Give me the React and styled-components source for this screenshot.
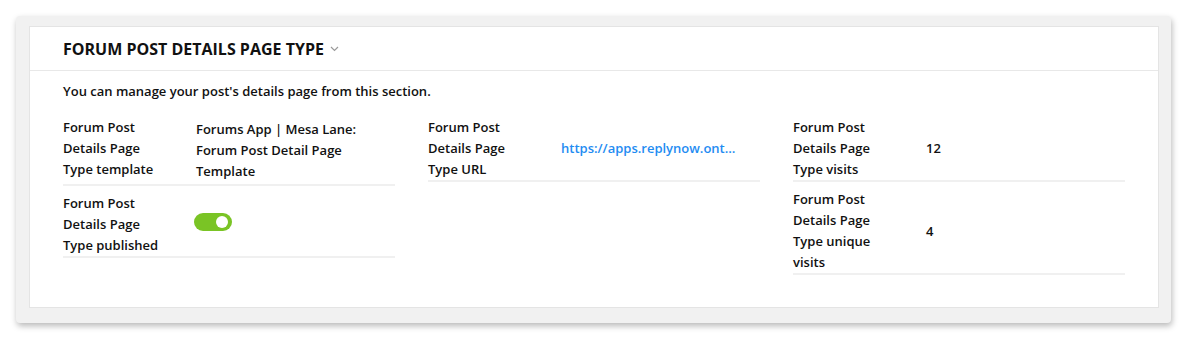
import React from "react";
import styled, { createGlobalStyle } from "styled-components";

const GlobalStyle = createGlobalStyle`
  body {
    margin: 0;
    padding: 16px;
    background: #fff;
    font-family: "Open Sans", "Liberation Sans", sans-serif;
    color: #111;
  }
`;

const Frame = styled.div`
  background: #f1f1f1;
  border-radius: 4px;
  box-shadow: 1px 3px 6px rgba(0, 0, 0, 0.28);
  padding: 10px 12px 15px 13px;
`;

const Card = styled.section`
  background: #fff;
  border: 1px solid #e4e4e4;
`;

const Header = styled.header`
  height: 43px;
  display: flex;
  align-items: center;
  gap: 6px;
  padding: 0 33px;
  border-bottom: 1px solid #e8e8e8;
  h2 {
    margin: 0;
    font-size: 16px;
    font-weight: 700;
    color: #111;
  }
  svg {
    margin-top: 1px;
  }
`;

const Body = styled.div`
  padding: 10px 32px 32px 33px;
`;

const Intro = styled.p`
  margin: 0 0 8px;
  font-size: 13px;
  font-weight: 600;
  line-height: 21px;
`;

const Columns = styled.div`
  display: grid;
  grid-template-columns: repeat(3, 332px);
  column-gap: 33px;
  align-items: start;
`;

const Column = styled.div`
  display: flex;
  flex-direction: column;
`;

const Row = styled.div`
  display: grid;
  grid-template-columns: 133px 1fr;
  align-items: center;
  padding-top: 7px;
  border-bottom: 2px solid #f0f0f0;
`;

const Label = styled.div`
  align-self: start;
  font-size: 13px;
  font-weight: 600;
  line-height: 21px;
  padding-right: 30px;
`;

const Value = styled.div`
  font-size: 13px;
  font-weight: 600;
  line-height: 21px;
  padding: 2px 20px 2px 0;
  min-width: 0;
  color: ${(p) => (p.$link ? "#1f8cf2" : "#111")};
  ${(p) =>
    p.$link &&
    `
    white-space: nowrap;
    overflow: hidden;
    text-overflow: ellipsis;
  `}
`;

const Switch = styled.span`
  position: relative;
  display: block;
  width: 38px;
  height: 18px;
  margin: 0 0 6px -2px;
  border-radius: 9px;
  background: ${(p) => (p.$on ? "#7ac425" : "#ccc")};
  &::after {
    content: "";
    position: absolute;
    top: 3px;
    ${(p) => (p.$on ? "right: 4px;" : "left: 4px;")}
    width: 12px;
    height: 12px;
    border-radius: 50%;
    background: #fff;
  }
`;

const Chevron = () => (
  <svg width="9" height="6" viewBox="0 0 9 6" fill="none">
    <path d="M1 1l3.5 3.5L8 1" stroke="#9a9a9a" strokeWidth="1.2" />
  </svg>
);

const Field = ({ label, children }) => (
  <Row>
    <Label>{label}</Label>
    {children}
  </Row>
);

const App = () => (
  <>
    <GlobalStyle />
    <Frame>
      <Card>
        <Header>
          <h2>FORUM POST DETAILS PAGE TYPE</h2>
          <Chevron />
        </Header>
        <Body>
          <Intro>You can manage your post's details page from this section.</Intro>
          <Columns>
            <Column>
              <Field label="Forum Post Details Page Type template">
                <Value>Forums App | Mesa Lane: Forum Post Detail Page Template</Value>
              </Field>
              <Field label="Forum Post Details Page Type published">
                <Value>
                  <Switch $on />
                </Value>
              </Field>
            </Column>
            <Column>
              <Field label="Forum Post Details Page Type URL">
                <Value $link>https://apps.replynow.ontraport.com/forums/mesa-lane</Value>
              </Field>
            </Column>
            <Column>
              <Field label="Forum Post Details Page Type visits">
                <Value>12</Value>
              </Field>
              <Field label="Forum Post Details Page Type unique visits">
                <Value>4</Value>
              </Field>
            </Column>
          </Columns>
        </Body>
      </Card>
    </Frame>
  </>
);

export default App;
